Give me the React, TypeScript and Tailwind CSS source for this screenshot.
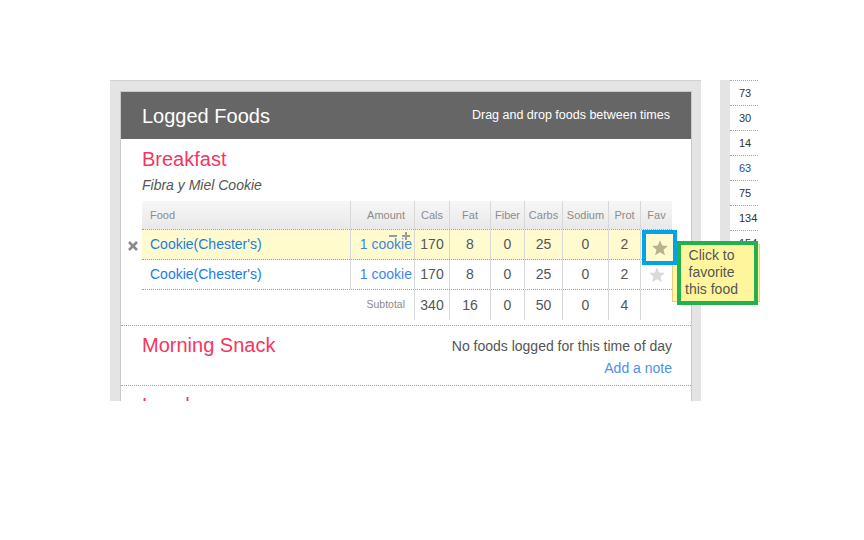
import React from 'react';

const COLS = ['w-[208px]', 'w-[64px]', 'w-[35px]', 'w-[41px]', 'w-[34px]', 'w-[38px]', 'w-[46px]', 'w-[32px]', 'w-[32px]'];
const HEADS = ['Food', 'Amount', 'Cals', 'Fat', 'Fiber', 'Carbs', 'Sodium', 'Prot', 'Fav'];

const rows = [
  { name: "Cookie(Chester's)", amount: '1 cookie', vals: ['170', '8', '0', '25', '0', '2'], hl: true },
  { name: "Cookie(Chester's)", amount: '1 cookie', vals: ['170', '8', '0', '25', '0', '2'], hl: false },
];

const sideNums = ['73', '30', '14', '63', '75', '134', '154'];

const Star = ({ color }: { color: string }) => (
  <svg width="18" height="18" viewBox="0 0 24 24">
    <polygon
      points="12,1.5 14.9,8.6 22.5,9.2 16.7,14.2 18.5,21.8 12,17.7 5.5,21.8 7.3,14.2 1.5,9.2 9.1,8.6"
      fill={color}
    />
  </svg>
);

const FoodTable = () => (
  <div className="w-[530px] text-[#555]">
    {/* header */}
    <div className="flex h-[29px] bg-linear-to-b from-[#f7f7f7] to-[#e9e9e9] border-b border-dotted border-[#9d9d9d] text-[11px] text-[#8c8c8c]">
      {HEADS.map((h, i) => (
        <div
          key={h}
          className={`${COLS[i]} h-full flex items-center ${
            i === 0 ? 'pl-[8px]' : i === 1 ? 'justify-end pr-[9px] border-l border-[#d8d8d8]' : 'justify-center border-l border-[#d8d8d8]'
          }`}
        >
          {h}
        </div>
      ))}
    </div>

    {rows.map((r, ri) => (
      <div
        key={ri}
        className={`relative flex h-[30px] border-b border-dotted border-[#9d9d9d] text-[14px] ${r.hl ? 'bg-[#fffbcf]' : 'bg-white'}`}
      >
        {r.hl && (
          <svg className="absolute left-[-14px] top-[11px]" width="10" height="10" viewBox="0 0 10 10">
            <path d="M1 1 L9 9 M9 1 L1 9" stroke="#8a8a8a" strokeWidth="2.6" strokeLinecap="butt" />
          </svg>
        )}
        <div className={`${COLS[0]} flex items-center pl-[8px] text-[#1a7be6]`}>{r.name}</div>
        <div className={`${COLS[1]} relative flex items-center justify-end pr-[2px] border-l border-[#d8d8d8] text-[#3d86e8]`}>
          {r.hl && (
            <svg className="absolute right-[3px] top-[1px]" width="22" height="9" viewBox="0 0 22 9">
              <path d="M0 5 H8 M13 5 H21 M17 1 V9" stroke="#9c9c9c" strokeWidth="2" />
            </svg>
          )}
          {r.amount}
        </div>
        {r.vals.map((v, vi) => (
          <div key={vi} className={`${COLS[vi + 2]} flex items-center justify-center border-l border-[#d8d8d8]`}>
            {v}
          </div>
        ))}
        <div className={`${COLS[8]} flex items-center justify-center border-l border-[#d8d8d8]`}>
          <Star color={r.hl ? '#b7b38c' : '#dadada'} />
        </div>
      </div>
    ))}

    {/* subtotal */}
    <div className="flex h-[30px] text-[14px]">
      <div className={`${COLS[0]}`} />
      <div className={`${COLS[1]} flex items-center justify-end pr-[9px] text-[10.5px] text-[#8c8c8c]`}>Subtotal</div>
      {['340', '16', '0', '50', '0', '4'].map((v, vi) => (
        <div key={vi} className={`${COLS[vi + 2]} flex items-center justify-center border-l border-[#d8d8d8]`}>
          {v}
        </div>
      ))}
      <div className={`${COLS[8]} border-l border-[#d8d8d8]`} />
    </div>
  </div>
);

export default function App() {
  return (
    <div className="relative w-[864px] h-[540px] bg-white overflow-hidden font-['Liberation_Sans',Arial,sans-serif]">
      <div className="flex pt-[80px] pl-[110px]">
        {/* main panel */}
        <div className="w-[591px] h-[321px] overflow-hidden bg-[#e3e4e3] border-t border-[#cfd0cf] pl-[10px] pr-[9px] pt-[10px]">
          <div className="bg-white border border-[#c9c9c9] h-[400px]">
            <div className="h-[47px] bg-[#666666] flex items-center justify-between pl-[21px] pr-[21px] text-white">
              <span className="text-[20px]">Logged Foods</span>
              <span className="text-[12.5px]">Drag and drop foods between times</span>
            </div>

            {/* Breakfast */}
            <div className="pt-[8px] pb-[5px] border-b border-dotted border-[#a3a3a3]">
              <div className="pl-[21px] pr-[19px]">
                <div className="h-[24px] leading-[24px] text-[20px] text-[#f5365f]">Breakfast</div>
                <div className="mt-[5px] h-[18px] leading-[18px] text-[14px] italic text-[#555]">Fibra y Miel Cookie</div>
                <div className="mt-[7px]">
                  <FoodTable />
                </div>
              </div>
            </div>

            {/* Morning Snack */}
            <div className="pt-[7px] pb-[6px] border-b border-dotted border-[#a3a3a3]">
              <div className="pl-[21px] pr-[19px] flex justify-between">
                <div className="h-[24px] leading-[24px] text-[20px] text-[#f5365f]">Morning Snack</div>
                <div className="mt-[2px] text-right text-[14px] leading-[22px]">
                  <div className="text-[#555]">No foods logged for this time of day</div>
                  <div className="text-[#4d90ef]">Add a note</div>
                </div>
              </div>
            </div>

            {/* Lunch */}
            <div className="pt-[7px]">
              <div className="pl-[21px] h-[24px] leading-[24px] text-[20px] text-[#f5365f]">Lunch</div>
            </div>
          </div>
        </div>

        {/* side column */}
        <div className="ml-[19px] flex h-[210px]">
          <div className="w-[10px] bg-[#e3e4e3]" />
          <div className="w-[28px] bg-white">
            {sideNums.map((n, i) => (
              <div
                key={i}
                className={`h-[25px] border-t border-dotted border-[#a3a3a3] pl-[9px] flex items-center text-[11px] ${
                  n === '63' ? 'text-[#2b4f86]' : 'text-[#333]'
                }`}
              >
                {n}
              </div>
            ))}
          </div>
        </div>
      </div>

      {/* tooltip behind annotation */}
      <div className="absolute left-[672px] top-[244px] w-[88px] h-[58px] bg-[#fff5a3] border border-[#e3d27c]" />

      {/* blue highlight box on fav star */}
      <div className="absolute left-[642px] top-[230px] w-[35px] h-[35px] border-[4px] border-[#00a2e8] bg-[#fffbcf] flex items-center justify-center">
        <Star color="#b7b38c" />
      </div>

      {/* green annotation box */}
      <div className="absolute left-[677px] top-[241px] w-[81px] h-[64px] border-[4px] border-[#22b14c] bg-[#fff59d] flex items-start justify-center pt-[2px] pr-[12px] text-center text-[14px] leading-[17px] text-[#555]">
        <div>
          Click to
          <br />
          favorite
          <br />
          this food
        </div>
      </div>
    </div>
  );
}
